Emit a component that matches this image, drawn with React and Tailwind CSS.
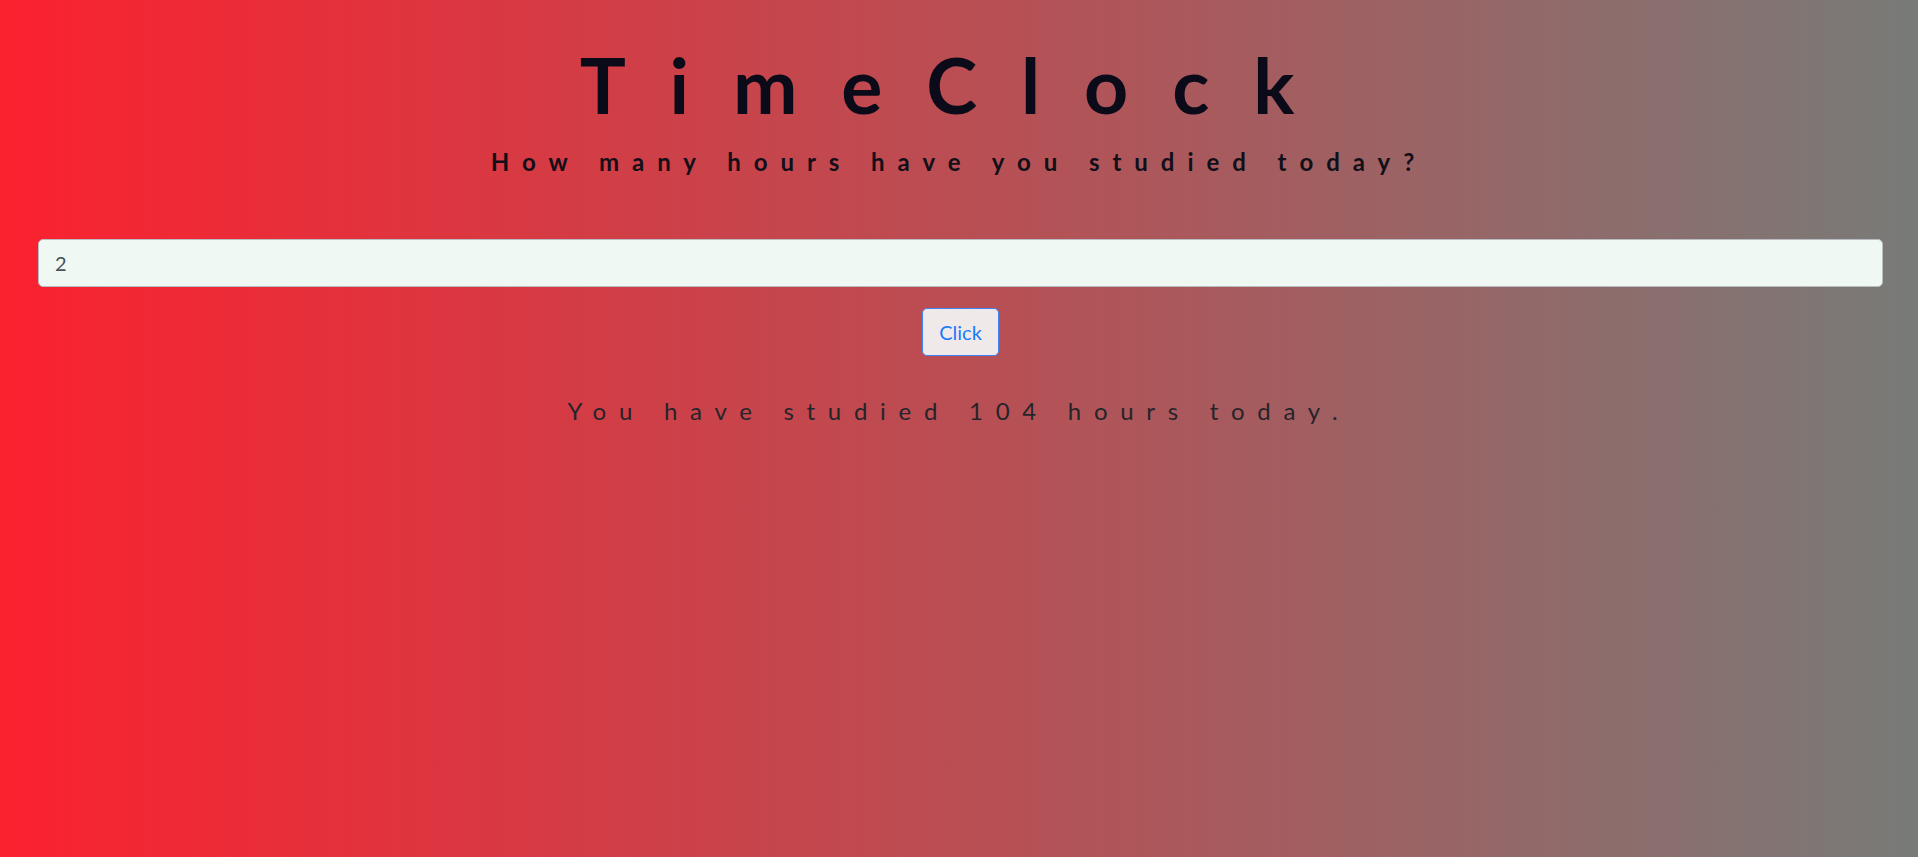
import React, { useState } from 'react';

export default function App() {
  const [hours, setHours] = useState('2');
  const [total, setTotal] = useState(104);

  const handleClick = () => {
    setTotal((t) => t + Number(hours || 0));
  };

  return (
    <div className="min-h-screen w-full bg-[linear-gradient(to_right,#fb212f,#787b78)] font-['Lato',sans-serif] text-center">
      {/* Header */}
      <h1 className="pt-[38px] text-[77px] font-bold leading-[1.2] tracking-[0.57em] text-[#0b0a18]">
        TimeClock
      </h1>
      <h4 className="mt-[18px] text-[24px] font-bold leading-[1.2] tracking-[0.54em] text-[#120f18]">
        How many hours have you studied today?
      </h4>

      <div className="pl-[38px] pr-[35px] pt-[62px]">
        <input
          type="text"
          value={hours}
          onChange={(e) => setHours(e.target.value)}
          className="block w-full h-[48px] px-4 text-[20px] text-[#495057] bg-[#eff8f3] border border-[#b9bdc1] rounded-[5px] outline-none"
        />
        <button
          onClick={handleClick}
          className="mt-[21px] h-[48px] px-[16px] text-[20px] text-[#1a7bf8] bg-[#efe9ea] border border-[#3d86f5] rounded-[5px]"
        >
          Click
        </button>
      </div>

      <p className="mt-[37px] text-[24px] font-normal tracking-[0.53em] text-[#25242b]">
        You have studied {total} hours today.
      </p>
    </div>
  );
}
